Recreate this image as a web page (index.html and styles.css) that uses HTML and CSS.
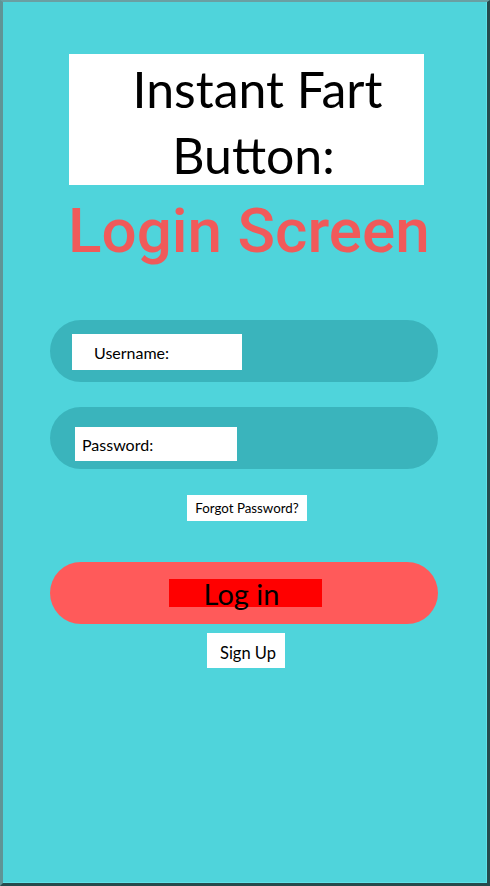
FILE: index.html
```html
<!DOCTYPE html>
<html>
<head>
<meta charset="utf-8">
<link rel="stylesheet" href="styles.css">
</head>
<body>
<div class="screen">
  <div class="title-box">
    <div class="title-line1">Instant Fart</div>
    <div class="title-line2">Button:</div>
  </div>
  <h1 class="subtitle">Login Screen</h1>
  <div class="pill field field-user">
    <div class="label label-user">Username:</div>
  </div>
  <div class="pill field field-pass">
    <div class="label label-pass">Password:</div>
  </div>
  <div class="forgot">Forgot Password?</div>
  <div class="pill login">
    <div class="login-label">Log in</div>
  </div>
  <div class="signup">Sign Up</div>
</div>
</body>
</html>
```

FILE: styles.css
```css
html, body {
  margin: 0;
  padding: 0;
}
body {
  width: 490px;
  height: 886px;
  overflow: hidden;
  font-family: Lato, "Open Sans", sans-serif;
  color: #000;
}
.screen {
  box-sizing: border-box;
  width: 490px;
  height: 886px;
  background: #4fd4db;
  border-top: 2px solid #6a9fa2;
  border-left: 3px solid #5f9496;
  border-right: 3px solid #254a4c;
  border-bottom: 3px solid #254a4c;
  box-shadow: inset -1px -1px 0 #5ee2e8;
  display: flex;
  flex-direction: column;
  align-items: flex-start;
}
.title-box {
  margin-top: 52px;
  margin-left: 66px;
  width: 355px;
  height: 131px;
  background: #fff;
  box-sizing: border-box;
  padding-left: 22px;
  text-align: center;
  font-size: 50px;
  line-height: 66px;
  padding-top: 2px;
}
.title-line2 {
  margin-left: -8px;
}
.subtitle {
  margin: 12px 0 0 65px;
  font-family: Roboto, sans-serif;
  font-weight: 500;
  font-size: 62px;
  line-height: 68px;
  color: #f05a5a;
  white-space: nowrap;
}
.pill {
  width: 388px;
  height: 62px;
  border-radius: 31px;
  margin-left: 47px;
  box-sizing: border-box;
  display: flex;
  align-items: center;
}
.field {
  background: #3ab4bc;
}
.field-user {
  margin-top: 55px;
}
.field-pass {
  margin-top: 25px;
}
.label {
  background: #fff;
  font-size: 16px;
  display: flex;
  align-items: center;
  box-sizing: border-box;
}
.label-user {
  margin-left: 22px;
  width: 170px;
  height: 36px;
  padding-left: 22px;
  margin-top: 2px;
}
.label-pass {
  margin-left: 25px;
  width: 162px;
  height: 34px;
  padding-left: 7px;
  margin-top: 12px;
}
.forgot {
  margin: 26px 0 0 184px;
  width: 120px;
  height: 26px;
  background: #fff;
  font-size: 13.3px;
  display: flex;
  align-items: center;
  justify-content: center;
}
.login {
  margin-top: 41px;
  background: #ff5a5a;
  justify-content: flex-start;
}
.login-label {
  margin-left: 119px;
  width: 153px;
  height: 28px;
  background: #ff0000;
  font-size: 29px;
  line-height: 28px;
  text-align: center;
  box-sizing: border-box;
  padding-right: 8px;
  padding-top: 1px;
  margin-top: -1px;
}
.signup {
  margin: 9px 0 0 204px;
  width: 78px;
  height: 35px;
  background: #fff;
  font-size: 16.5px;
  display: flex;
  align-items: center;
  justify-content: center;
  padding-top: 4px;
  padding-left: 4px;
  box-sizing: border-box;
}
```
